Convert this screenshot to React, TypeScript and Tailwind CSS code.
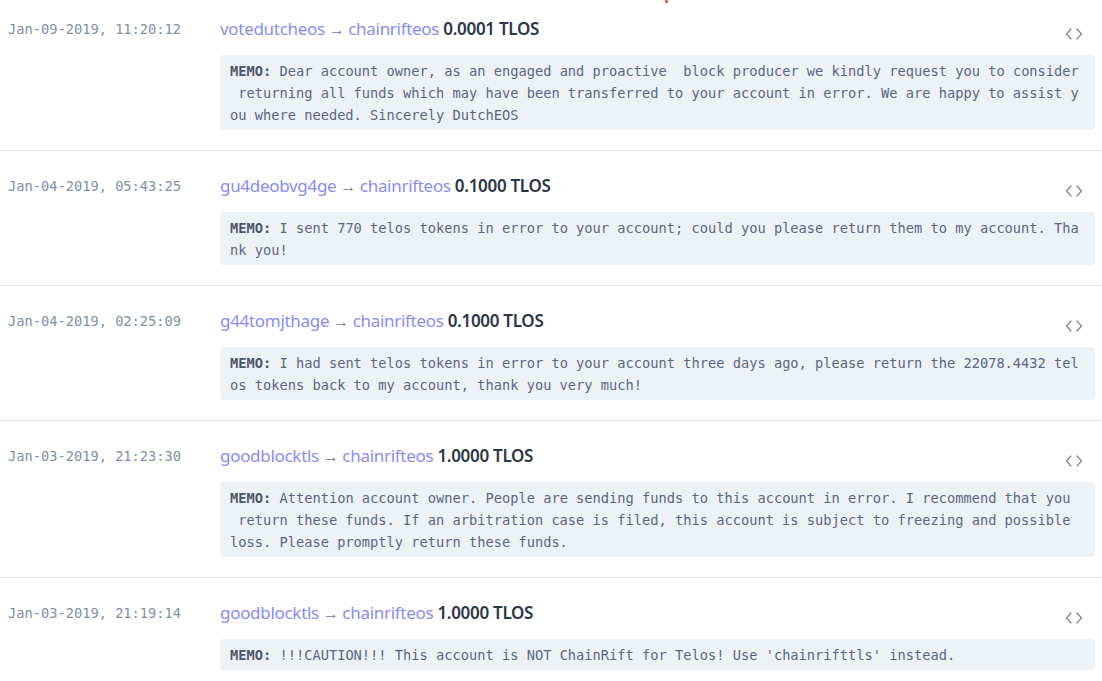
import React from 'react';

interface Transfer {
    date: string;
    from: string;
    to: string;
    amount: string;
    memo: React.ReactNode;
}

const transfers: Transfer[] = [
    {
        date: 'Jan-09-2019, 11:20:12',
        from: 'votedutcheos',
        to: 'chainrifteos',
        amount: '0.0001 TLOS',
        // <wbr /> lets the line break before the space, as the original page wraps it
        memo: (
            <>
                Dear account owner, as an engaged and proactive {' '}block producer we kindly request you to consider<wbr /> returning all funds which may have been transferred to your account in error. We are happy to assist you where needed. Sincerely DutchEOS
            </>
        ),
    },
    {
        date: 'Jan-04-2019, 05:43:25',
        from: 'gu4deobvg4ge',
        to: 'chainrifteos',
        amount: '0.1000 TLOS',
        memo: 'I sent 770 telos tokens in error to your account; could you please return them to my account. Thank you!',
    },
    {
        date: 'Jan-04-2019, 02:25:09',
        from: 'g44tomjthage',
        to: 'chainrifteos',
        amount: '0.1000 TLOS',
        memo: 'I had sent telos tokens in error to your account three days ago, please return the 22078.4432 telos tokens back to my account, thank you very much!',
    },
    {
        date: 'Jan-03-2019, 21:23:30',
        from: 'goodblocktls',
        to: 'chainrifteos',
        amount: '1.0000 TLOS',
        memo: 'Attention account owner. People are sending funds to this account in error. I recommend that you  return these funds. If an arbitration case is filed, this account is subject to freezing and possible loss. Please promptly return these funds.',
    },
    {
        date: 'Jan-03-2019, 21:19:14',
        from: 'goodblocktls',
        to: 'chainrifteos',
        amount: '1.0000 TLOS',
        memo: "!!!CAUTION!!! This account is NOT ChainRift for Telos! Use 'chainrifttls' instead.",
    },
];

function ToggleIcon() {
    return (
        <svg width="18" height="12" viewBox="0 0 18 12" fill="none" stroke="#7a869a" strokeWidth="1.2" strokeLinecap="round" strokeLinejoin="round">
            <path d="M6 1 L1.5 6 L6 11" />
            <path d="M12 1 L16.5 6 L12 11" />
        </svg>
    );
}

function TransferRow({ t, first }: { t: Transfer; first: boolean }) {
    return (
        <div className={`flex border-b border-[#e2e8f0] pb-[20px] ${first ? 'pt-[15px]' : 'pt-[21px]'}`}>
            <div className="w-[220px] shrink-0 pl-2 font-['DejaVu_Sans_Mono',monospace] text-[13.7px] leading-[28px] text-[#8190a8]">
                {t.date}
            </div>
            <div className="flex-1 pr-[7px]">
                <div className="flex h-[28px] items-start justify-between">
                    <div className="h-[28px] whitespace-nowrap font-['Noto_Sans',sans-serif] text-[17px] leading-[28px] tracking-[-0.3px]">
                        <span className="text-[#8a8cf4]">{t.from}</span>
                        <span className="text-[16px] leading-none text-[#718096]"> → </span>
                        <span className="text-[#8a8cf4]">{t.to}</span>{' '}
                        <span className="font-semibold text-[#2d3748]">{t.amount}</span>
                    </div>
                    <div className="mr-[12px] mt-[13px]">
                        <ToggleIcon />
                    </div>
                </div>
                <div className="mt-3 rounded bg-[#edf2f7] px-[10px] py-[4.5px] font-['DejaVu_Sans_Mono',monospace] text-[13.7px] leading-[22px] text-[#5a6781] whitespace-break-spaces break-all">
                    <span className="font-bold text-[#4a5568]">MEMO:</span> {t.memo}
                </div>
            </div>
        </div>
    );
}

export default function App() {
    return (
        <div className="relative min-h-screen bg-white">
            <div className="absolute left-[665px] top-0 h-[3px] w-[3px] rounded-full bg-[#ff2a2a]" />
            {transfers.map((t, i) => (
                <TransferRow key={i} t={t} first={i === 0} />
            ))}
        </div>
    );
}
